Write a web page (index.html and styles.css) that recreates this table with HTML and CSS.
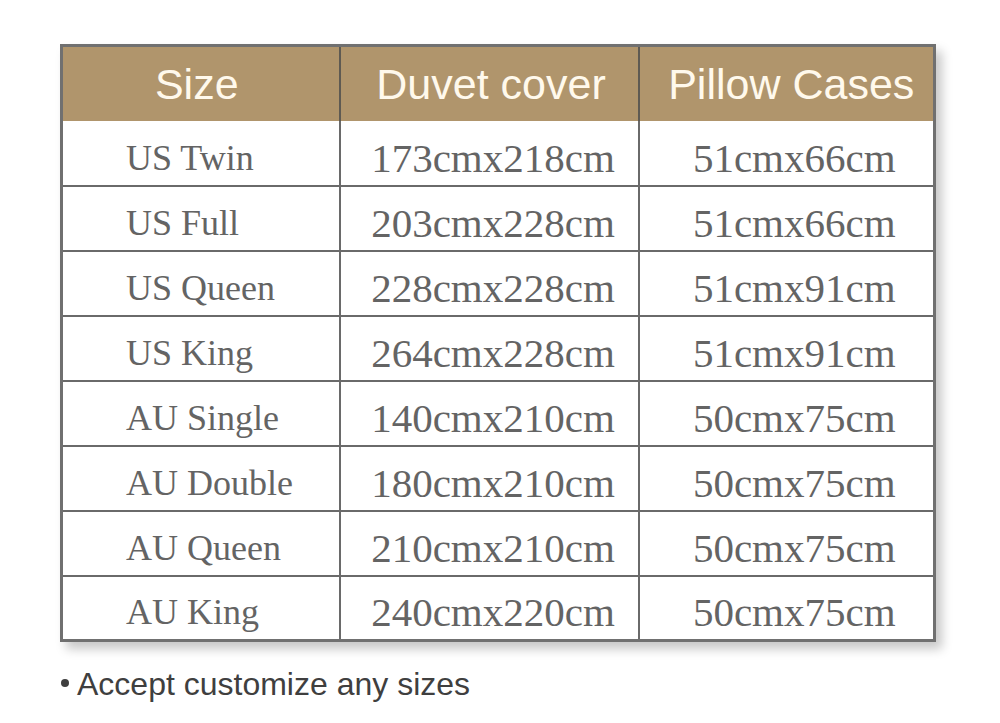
FILE: index.html
```html
<!DOCTYPE html>
<html>
<head>
<meta charset="utf-8">
<link rel="stylesheet" href="styles.css">
</head>
<body>
<div class="page">
  <table class="sizes">
    <colgroup>
      <col class="w1">
      <col class="w2">
      <col class="w3">
    </colgroup>
    <thead>
      <tr>
        <th class="c1">Size</th>
        <th class="c2">Duvet cover</th>
        <th class="c3">Pillow Cases</th>
      </tr>
    </thead>
    <tbody>
      <tr><td class="c1">US Twin</td><td class="c2">173cmx218cm</td><td class="c3">51cmx66cm</td></tr>
      <tr><td class="c1">US Full</td><td class="c2">203cmx228cm</td><td class="c3">51cmx66cm</td></tr>
      <tr><td class="c1">US Queen</td><td class="c2">228cmx228cm</td><td class="c3">51cmx91cm</td></tr>
      <tr><td class="c1">US King</td><td class="c2">264cmx228cm</td><td class="c3">51cmx91cm</td></tr>
      <tr><td class="c1">AU Single</td><td class="c2">140cmx210cm</td><td class="c3">50cmx75cm</td></tr>
      <tr><td class="c1">AU Double</td><td class="c2">180cmx210cm</td><td class="c3">50cmx75cm</td></tr>
      <tr><td class="c1">AU Queen</td><td class="c2">210cmx210cm</td><td class="c3">50cmx75cm</td></tr>
      <tr class="last"><td class="c1">AU King</td><td class="c2">240cmx220cm</td><td class="c3">50cmx75cm</td></tr>
    </tbody>
  </table>
  <p class="note"><span class="dot"></span>Accept customize any sizes</p>
</div>
</body>
</html>
```
FILE: styles.css
```css
html, body {
  margin: 0;
  padding: 0;
  background: #ffffff;
}
.page {
  padding: 44px 0 0 60px;
}
.sizes {
  border-collapse: collapse;
  table-layout: fixed;
  width: 873px;
  border: 3px solid #707070;
  box-shadow: 6px 7px 10px rgba(0, 0, 0, 0.22);
}
.w1 { width: 278px; }
.w2 { width: 299px; }
.w3 { width: 296px; }
.sizes th {
  height: 74px;
  padding: 0;
  background: #b0956c;
  color: #fff9ec;
  font-family: "Liberation Sans", Arial, sans-serif;
  font-weight: normal;
  font-size: 43px;
  text-align: center;
  vertical-align: middle;
  border-left: 2px solid #5e5a52;
}
.sizes th.c1 { border-left: none; padding-right: 8px; }
.sizes th.c2 { padding-left: 4px; }
.sizes th.c3 { padding-left: 10px; }
.sizes td {
  box-sizing: border-box;
  height: 65px;
  padding: 9px 0 0 0;
  color: #646464;
  font-family: "Liberation Serif", "Times New Roman", serif;
  font-size: 41px;
  line-height: 48px;
  vertical-align: middle;
  border-top: 2px solid #6a6a6a;
  border-left: 2px solid #6a6a6a;
  white-space: nowrap;
}
.sizes tbody tr:first-child td { border-top: none; }
.sizes td.c1 {
  border-left: none;
  font-size: 36px;
  padding-left: 63px;
  text-align: left;
}
.sizes td.c2 { text-align: center; padding-left: 8px; }
.sizes td.c3 { text-align: center; padding-left: 16px; }
.sizes tr.last td { height: 64px; }
.note {
  margin: 24px 0 0 0;
  font-family: "Liberation Sans", Arial, sans-serif;
  font-size: 32px;
  color: #3f3f3f;
  display: flex;
  align-items: center;
}
.dot {
  display: inline-block;
  width: 8px;
  height: 8px;
  border-radius: 50%;
  background: #3f3f3f;
  margin: 0 8px 2px 1px;
}
```
